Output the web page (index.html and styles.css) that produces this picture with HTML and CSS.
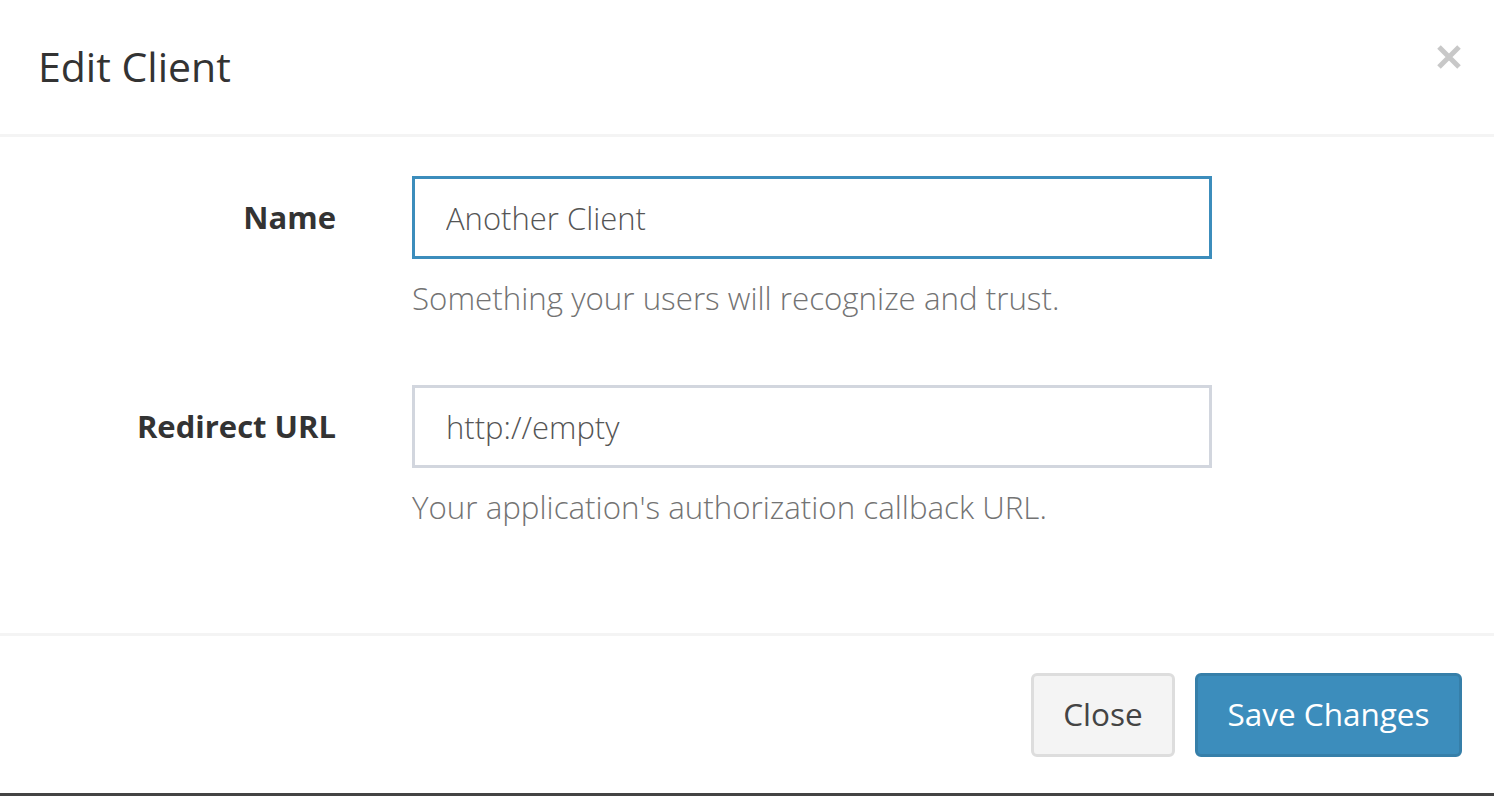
FILE: index.html
```html
<!DOCTYPE html>
<html lang="en">
<head>
<meta charset="utf-8">
<title>Edit Client</title>
<link rel="stylesheet" href="styles.css">
</head>
<body>
<div class="modal">
  <div class="modal-header">
    <h4 class="modal-title">Edit Client</h4>
    <button class="close" type="button" aria-label="Close">
      <svg width="24" height="24" viewBox="0 0 24 24"><path d="M2 2 L22 22 M22 2 L2 22" stroke="#c8c8c8" stroke-width="5" fill="none"/></svg>
    </button>
  </div>
  <div class="modal-body">
    <div class="form-group">
      <label class="control-label">Name</label>
      <div class="field">
        <input class="form-control focus" type="text" value="Another Client">
        <p class="help-block">Something your users will recognize and trust.</p>
      </div>
    </div>
    <div class="form-group">
      <label class="control-label">Redirect URL</label>
      <div class="field">
        <input class="form-control" type="text" value="http://empty">
        <p class="help-block">Your application's authorization callback URL.</p>
      </div>
    </div>
  </div>
  <div class="modal-footer">
    <button class="btn btn-default" type="button">Close</button>
    <button class="btn btn-primary" type="button">Save Changes</button>
  </div>
</div>
</body>
</html>
```
FILE: styles.css
```css
html, body {
  margin: 0;
  padding: 0;
  background: #fff;
}
body {
  font-family: "Open Sans", "Lato", sans-serif;
  color: #333;
}
.modal {
  width: 1494px;
  height: 796px;
  box-sizing: border-box;
  display: flex;
  flex-direction: column;
  border-bottom: 3px solid #444;
}
.modal-header {
  height: 134px;
  border-bottom: 3px solid #f4f4f4;
  display: flex;
  align-items: center;
  justify-content: space-between;
  padding: 0 33px 0 38px;
  flex: none;
}
.modal-title {
  margin: 0;
  font-size: 41px;
  font-weight: 400;
  color: #333;
  line-height: 1;
  padding-bottom: 2px;
}
.close {
  border: 0;
  background: none;
  padding: 0;
  width: 24px;
  height: 24px;
  align-self: flex-start;
  margin-top: 45px;
  cursor: pointer;
}
.close svg { display: block; }
.modal-body {
  flex: 1;
  padding-top: 39px;
}
.form-group {
  display: grid;
  grid-template-columns: 336px 800px;
  column-gap: 76px;
  margin-bottom: 67px;
}
.control-label {
  text-align: right;
  font-weight: 700;
  font-size: 31px;
  height: 83px;
  line-height: 83px;
  color: #333;
}
.form-control {
  display: block;
  box-sizing: border-box;
  width: 800px;
  height: 83px;
  border: 3px solid #d2d6de;
  padding: 0 0 0 31px;
  font-family: inherit;
  font-size: 31px;
  font-weight: 300;
  color: #555;
  background: #fff;
  outline: none;
  border-radius: 0;
}
.form-control.focus {
  border-color: #3c8dbc;
}
.help-block {
  margin: 19px 0 0;
  font-size: 31.3px;
  font-weight: 300;
  line-height: 40px;
  color: #737373;
}
.modal-footer {
  height: 160px;
  flex: none;
  border-top: 3px solid #f4f4f4;
  box-sizing: border-box;
  display: flex;
  justify-content: flex-end;
  align-items: flex-start;
  padding: 37px 32px 0 0;
  gap: 20px;
}
.btn {
  height: 84px;
  box-sizing: border-box;
  font-family: inherit;
  font-size: 31.5px;
  font-weight: 400;
  border-radius: 6px;
  padding: 0 0 3px;
  cursor: pointer;
}
.btn-default {
  background: #f4f4f4;
  border: 3px solid #dddddd;
  color: #444;
  width: 144px;
}
.btn-primary {
  background: #3c8dbc;
  border: 3px solid #367fa9;
  color: #fff;
  width: 267px;
}
```
